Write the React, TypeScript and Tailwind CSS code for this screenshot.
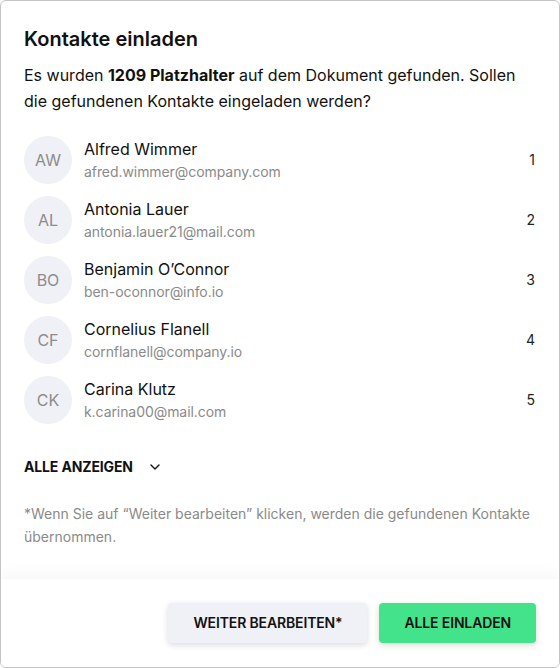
import { ChevronDown } from 'lucide-react'

const kontakte = [
  { initialen: 'AW', name: 'Alfred Wimmer', email: 'afred.wimmer@company.com' },
  { initialen: 'AL', name: 'Antonia Lauer', email: 'antonia.lauer21@mail.com' },
  { initialen: 'BO', name: 'Benjamin O’Connor', email: 'ben-oconnor@info.io' },
  { initialen: 'CF', name: 'Cornelius Flanell', email: 'cornflanell@company.io' },
  { initialen: 'CK', name: 'Carina Klutz', email: 'k.carina00@mail.com' },
]

export default function App() {
  return (
    <div
      className="w-[560px] h-[668px] flex flex-col bg-white border border-[#c4c4c4] rounded-md overflow-hidden text-[#111]"
      style={{ fontFamily: 'Inter, "Noto Sans", sans-serif' }}
    >
      <div className="flex-1 px-[23px] pt-6">
        <h2 className="text-xl leading-7 font-semibold">Kontakte einladen</h2>
        <p className="mt-[9px] text-base leading-[26px]">
          Es wurden <span className="font-bold">1209 Platzhalter</span> auf dem Dokument gefunden. Sollen die
          gefundenen Kontakte eingeladen werden?
        </p>

        <ul className="mt-[22px] flex flex-col gap-3">
          {kontakte.map((k, i) => (
            <li key={k.email} className="flex items-center gap-3 h-12">
              <div className="w-12 h-12 rounded-full bg-[#f0f1f6] flex items-center justify-center text-base text-[#8c8c8c]">
                {k.initialen}
              </div>
              <div className="flex-1 flex flex-col -mt-px">
                <span className="text-base leading-6">{k.name}</span>
                <span className="text-sm leading-[22px] text-[#8a8a8a] tracking-[-0.005em]">{k.email}</span>
              </div>
              <span className="text-sm text-[#222] pr-px">{i + 1}</span>
            </li>
          ))}
        </ul>

        <button className="mt-[33px] flex items-center gap-[14px] text-sm leading-5 font-bold tracking-[-0.01em]">
          ALLE ANZEIGEN
          <ChevronDown size={16} strokeWidth={2} />
        </button>

        <p className="mt-[25px] text-sm leading-[23px] text-[#8a8a8a]">
          *Wenn Sie auf “Weiter bearbeiten” klicken, werden die gefundenen Kontakte übernommen.
        </p>
      </div>

      <div className="flex justify-end gap-3 px-[23px] py-6 bg-white shadow-[0_-6px_16px_rgba(0,0,0,0.035)]">
        <button className="h-10 px-[25px] rounded bg-[#f0f1f6] text-sm font-semibold tracking-[-0.01em] shadow-[0_2px_6px_rgba(0,0,0,0.15)]">
          WEITER BEARBEITEN*
        </button>
        <button className="h-10 px-[25px] rounded bg-[#43e38c] text-sm font-semibold tracking-[-0.01em] shadow-[0_2px_6px_rgba(0,0,0,0.15)]">
          ALLE EINLADEN
        </button>
      </div>
    </div>
  )
}
